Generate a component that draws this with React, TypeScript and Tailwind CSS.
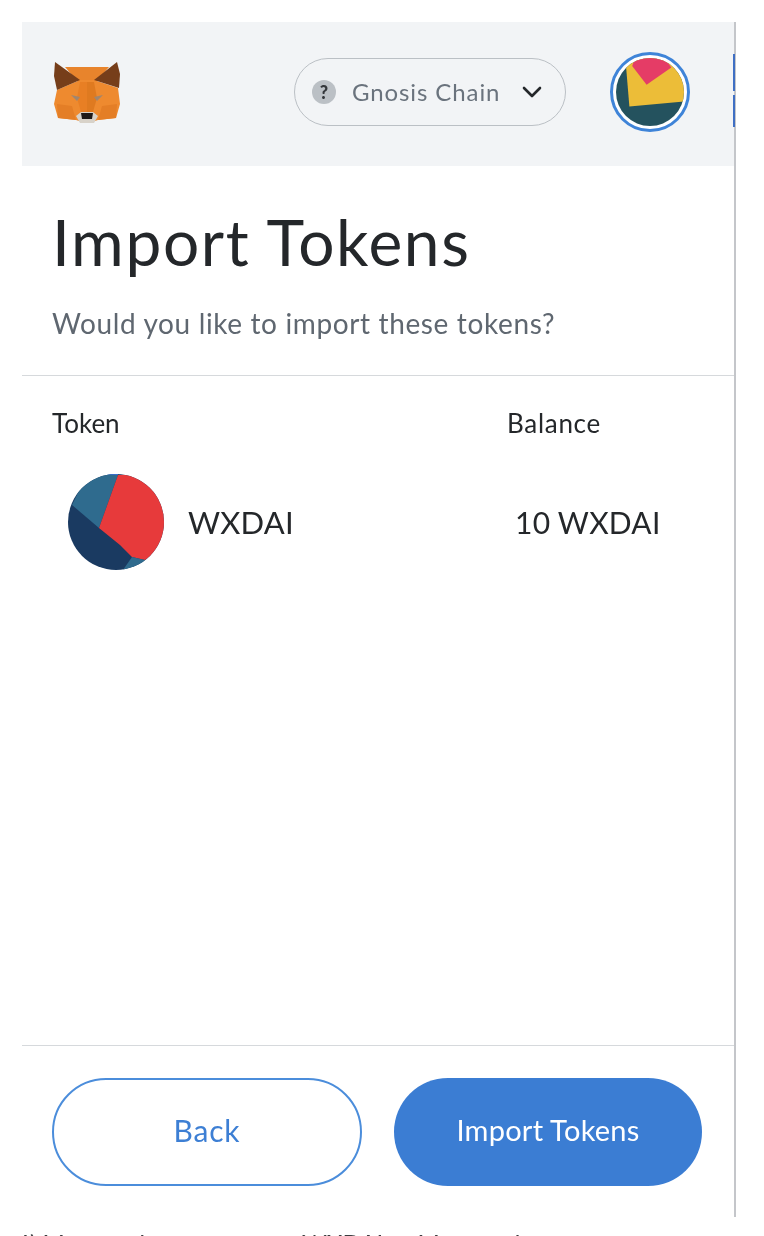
export default function App() {
  return (
    <div className="relative h-[1236px] w-[764px] overflow-hidden bg-white pl-[22px] pt-[22px] font-['Lato',sans-serif] blur-[0.5px]">
      <div className="relative flex h-[1195px] w-[714px] flex-col border-r-2 border-[#c4c6ca]">
        <div className="absolute right-[-1px] top-[32px] flex h-[73px] w-[2px] flex-col gap-[4px]">
          <span className="flex-1 bg-[#3f6fc4]" />
          <span className="h-[32px] bg-[#3f6fc4]" />
        </div>
        <header className="flex h-[144px] items-center bg-[#f2f4f6] pb-[4px]">
          <svg className="ml-[30px] h-[64px] w-[70px] shrink-0" viewBox="0 0 70 64">
            <path d="M13 7 L57 7 L44 22 L26 22 Z" fill="#e8842c" />
            <path d="M5 30 L28 20 L42 20 L66 28 L68 44 L64 58 L46 60 L40 62 L30 62 L24 60 L6 58 L2 44 Z" fill="#ee8a2f" />
            <path d="M3 2 L28 20 L5 30 L2 16 Z" fill="#763e1a" />
            <path d="M65 2 L42 20 L67 28 L68 14 Z" fill="#763e1a" />
            <path d="M28 22 L35 22 L35 52 L29 52 L25 38 Z" fill="#e87f24" />
            <path d="M42 22 L35 22 L35 52 L41 52 L45 38 Z" fill="#df7a20" />
            <path d="M19 35 L28 37 L25 41 Z" fill="#a08670" />
            <path d="M51 35 L42 37 L45 41 Z" fill="#a08670" />
            <path d="M5 44 L20 46 L24 60 L6 58 Z" fill="#e47e26" />
            <path d="M65 44 L50 46 L46 60 L64 58 Z" fill="#e47e26" />
            <path d="M24 56 L29 52 L41 52 L46 56 L42 63 L28 63 Z" fill="#d8d2c9" />
            <path d="M29 53 L41 53 L40 59 L30 59 Z" fill="#1f1a18" />
          </svg>
          <div className="ml-[172px] flex h-[68px] w-[272px] shrink-0 items-center rounded-full border border-[#bbc0c5] pl-[17px]">
            <span className="flex h-[24px] w-[24px] items-center justify-center rounded-full bg-[#bbc0c5] text-[18px] font-black text-[#35383c]">?</span>
            <span className="ml-[16px] text-[24px] tracking-[0.9px] text-[#6a737d]">Gnosis Chain</span>
            <svg className="ml-[22px] h-[14px] w-[20px]" viewBox="0 0 20 14" fill="none" stroke="#24272a" strokeWidth="2.6" strokeLinecap="round" strokeLinejoin="round">
              <path d="M2 3 L10 11 L18 3" />
            </svg>
          </div>
          <div className="ml-[44px] flex h-[80px] w-[80px] shrink-0 items-center justify-center rounded-full border-[3px] border-[#3f84d8] bg-white">
            <svg className="h-[68px] w-[68px]" viewBox="0 0 66 66">
              <defs>
                <clipPath id="acct"><circle cx="33" cy="33" r="33" /></clipPath>
              </defs>
              <g clipPath="url(#acct)">
                <rect width="66" height="66" fill="#24525e" />
                <path d="M9.7 7.7 L13 47 L68 42 L68 -4 L20 -4 Z" fill="#ecbd38" />
                <path d="M15.7 7.7 L29.7 26 L53.7 9.3 L44 -4 L20 -4 Z" fill="#e53c66" />
              </g>
            </svg>
          </div>
        </header>
        <section className="h-[210px] border-b border-[#d6d9dc] pl-[30px]">
          <h1 className="mt-[38px] text-[64px] leading-[76px] tracking-[1.65px] text-[#24272a]">Import Tokens</h1>
          <p className="mt-[26px] text-[28px] leading-[34px] tracking-[0.63px] text-[#5f6770]">Would you like to import these tokens?</p>
        </section>
        <main className="flex-1 pl-[30px]">
          <div className="mt-[33px] flex text-[26px] leading-[28px] text-[#24272a]">
            <span className="w-[455px]">Token</span>
            <span className="tracking-[0.7px]">Balance</span>
          </div>
          <div className="mt-[37px] flex items-center">
            <svg className="ml-[16px] h-[96px] w-[96px] shrink-0" viewBox="0 0 96 96">
              <defs>
                <clipPath id="tok"><circle cx="48" cy="48" r="48" /></clipPath>
              </defs>
              <g clipPath="url(#tok)">
                <rect width="96" height="96" fill="#1a3a61" />
                <path d="M4 31 L31 54 L50 1 L50 -2 L20 -2 Z" fill="#2f6b8e" />
                <path d="M38 -2 L50 -2 L50 1 L38 1 Z" fill="#3a6fd0" />
                <path d="M50 1 L31 54 L52 71 L64 83 L77 86 L100 70 L100 0 Z" fill="#e73a3b" />
                <path d="M55 96 L64 83 L77 86 L70 98 Z" fill="#2f6b8e" />
              </g>
            </svg>
            <span className="ml-[24px] w-[327px] shrink-0 text-[31px] tracking-[0.2px] text-[#24272a]">WXDAI</span>
            <span className="text-[30px] tracking-[0.25px] text-[#24272a]">10 WXDAI</span>
          </div>
        </main>
        <footer className="flex h-[172px] gap-[32px] border-t border-[#d6d9dc] pl-[30px] pt-[32px]">
          <button className="h-[108px] w-[310px] rounded-full border-2 border-[#4b8ddb] bg-white pb-[4px] text-[30px] tracking-[0.8px] text-[#3d7fd4]">Back</button>
          <button className="h-[108px] w-[308px] rounded-full bg-[#3b7dd3] pb-[4px] text-[29px] tracking-[0.25px] text-white">Import Tokens</button>
        </footer>
      </div>
      <div className="mt-[12px] ml-[-6px] flex text-[24px] leading-[28px] text-[#3a3d40]">
        <span className="w-[286px]">4) Metamask</span>
        <span>WXDAI to Metamask</span>
      </div>
    </div>
  );
}
